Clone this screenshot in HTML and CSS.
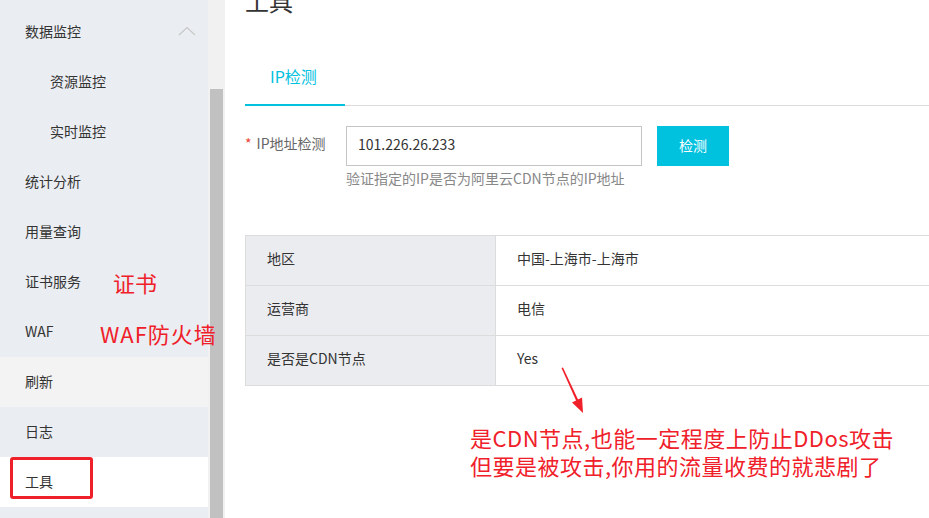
FILE: index.html
```html
<!DOCTYPE html>
<html lang="zh-CN">
<head>
<meta charset="utf-8">
<title>工具</title>
<link rel="stylesheet" href="styles.css">
</head>
<body>
<div class="page">
  <nav class="sidebar">
    <div class="nav-item group">
      <span>数据监控</span>
      <svg class="chev" width="18" height="10" viewBox="0 0 18 10"><polyline points="1,9 9,1.5 17,9" fill="none" stroke="#c8c8c8" stroke-width="1.2"/></svg>
    </div>
    <div class="nav-item sub">资源监控</div>
    <div class="nav-item sub">实时监控</div>
    <div class="nav-item">统计分析</div>
    <div class="nav-item">用量查询</div>
    <div class="nav-item">证书服务</div>
    <div class="nav-item">WAF</div>
    <div class="nav-item hover">刷新</div>
    <div class="nav-item">日志</div>
    <div class="nav-item active">工具</div>
  </nav>
  <div class="scrollbar"><div class="thumb"></div></div>
  <main class="main">
    <h1 class="title">工具</h1>
    <div class="tabs">
      <div class="tab active">IP检测</div>
    </div>
    <div class="form-row">
      <label class="label"><span class="star">*</span>IP地址检测</label>
      <div class="field">
        <div class="controls">
          <div class="input">101.226.26.233</div>
          <button class="btn">检测</button>
        </div>
        <div class="hint">验证指定的IP是否为阿里云CDN节点的IP地址</div>
      </div>
    </div>
    <table class="result">
      <tr><td class="k">地区</td><td class="v">中国-上海市-上海市</td></tr>
      <tr><td class="k">运营商</td><td class="v">电信</td></tr>
      <tr><td class="k">是否是CDN节点</td><td class="v">Yes</td></tr>
    </table>
  </main>

  <div class="anno anno-cert">证书</div>
  <div class="anno anno-waf">WAF防火墙</div>
  <div class="anno-box"></div>
  <svg class="anno-arrow" width="40" height="60" viewBox="555 360 40 60">
    <polygon points="561.5,368 563,367.5 578.5,400.5 576.5,401.5" fill="#f0202a"/>
    <polygon points="583,413 572,402.5 582,397.5" fill="#f0202a"/>
  </svg>
  <div class="anno anno-note">是CDN节点,也能一定程度上防止DDos攻击<br>但要是被攻击,你用的流量收费的就悲剧了</div>
</div>
</body>
</html>
```

FILE: styles.css
```css
* { box-sizing: border-box; }
html, body { margin: 0; padding: 0; }
body {
  font-family: "Noto Sans CJK SC", "Noto Sans", sans-serif;
  color: #333;
  background: #fff;
}
.page {
  position: relative;
  display: flex;
  width: 929px;
  height: 518px;
  overflow: hidden;
}
.sidebar {
  width: 208px;
  flex: none;
  background: #eaedf1;
  padding-top: 7px;
  display: flex;
  flex-direction: column;
}
.nav-item {
  height: 50px;
  display: flex;
  align-items: center;
  padding-left: 25px;
  padding-bottom: 3px;
  font-size: 14px;
  color: #333;
  flex: none;
}
.nav-item.sub { padding-left: 50px; }
.nav-item.group { justify-content: space-between; padding-right: 12px; }
.nav-item.group .chev { margin-top: 0; }
.nav-item.hover { background: #f3f3f4; }
.nav-item.active { background: #fff; }
.scrollbar {
  width: 17px;
  flex: none;
  background: #f1f1f1;
  padding: 89px 2px 0 2px;
}
.thumb { background: #c1c1c1; height: 100%; }
.main {
  flex: 1;
  min-width: 0;
  padding-left: 20px;
  overflow: hidden;
}
.title {
  margin: -17px 0 0 0;
  font-size: 24px;
  font-weight: normal;
  line-height: 36px;
  height: 36px;
  color: #333;
}
.tabs {
  margin-top: 33px;
  display: flex;
  border-bottom: 1px solid #dcdcdc;
  width: 800px;
}
.tab {
  width: 100px;
  height: 54px;
  padding-left: 25px;
  font-size: 16px;
  line-height: 48px;
  color: #00c1de;
  border-bottom: 2px solid #00c1de;
  margin-bottom: -1px;
}
.form-row {
  display: flex;
  margin-top: 20px;
}
.label {
  width: 101px;
  flex: none;
  font-size: 14px;
  color: #666;
  line-height: 34px;
}
.star { color: #f04134; margin-right: 5px; font-size: 14px; }
.controls { display: flex; }
.input {
  width: 296px;
  height: 40px;
  border: 1px solid #c4c4c4;
  font-size: 14px;
  line-height: 34px;
  padding-left: 11px;
  color: #333;
}
.btn {
  margin-left: 15px;
  width: 72px;
  height: 40px;
  border: 0;
  background: #00c1de;
  color: #fff;
  font-family: inherit;
  font-size: 14px;
  padding: 0 0 3px 0;
}
.hint {
  font-size: 14px;
  color: #888;
  line-height: 24px;
}
.result {
  margin-top: 45px;
  border-collapse: collapse;
  width: 800px;
}
.result td {
  height: 50px;
  border: 1px solid #dcdcdc;
  font-size: 14px;
  color: #333;
  padding: 0 0 5px 21px;
}
.result td.k { width: 250px; background: #ebecf0; }
.anno {
  position: absolute;
  color: #f0202a;
  font-size: 22px;
  line-height: 28px;
  white-space: nowrap;
}
.anno-cert { left: 113px; top: 268px; }
.anno-waf { left: 100px; top: 319px; letter-spacing: 1px; }
.anno-note { left: 470px; top: 423px; letter-spacing: 0.5px; }
.anno-box {
  position: absolute;
  left: 10px;
  top: 457px;
  width: 83px;
  height: 42px;
  border: 3px solid #f0202a;
  border-radius: 3px;
}
.anno-arrow { position: absolute; left: 555px; top: 360px; }
```
